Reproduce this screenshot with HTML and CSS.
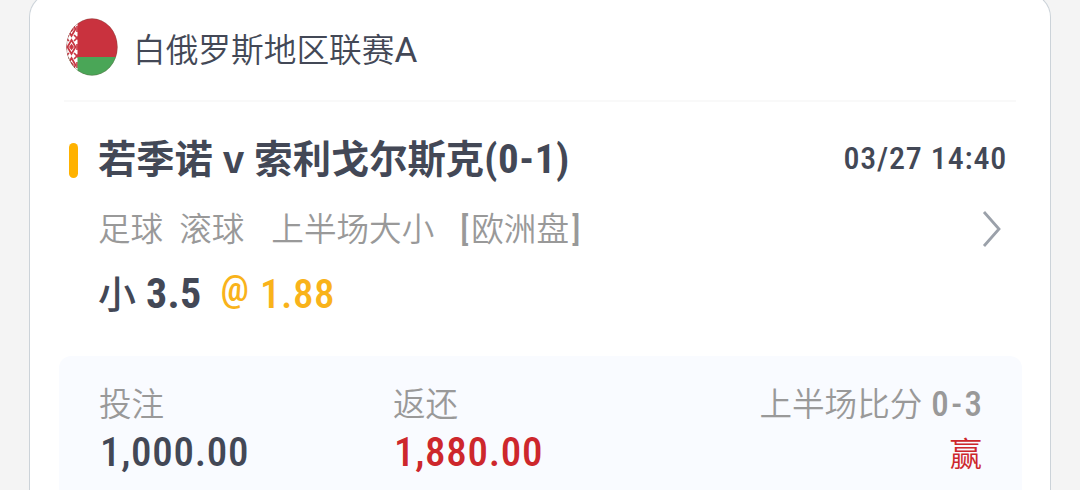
FILE: index.html
```html
<!DOCTYPE html>
<html lang="zh-CN">
<head>
  <meta charset="UTF-8">
  <meta name="viewport" content="width=device-width, initial-scale=1.0">
  <title>注单</title>
  <link rel="stylesheet" href="styles.css">
</head>
<body>
  <div class="card">
    <div class="league">
      <svg class="flag" viewBox="0 0 52 58">
        <defs>
          <clipPath id="round"><ellipse cx="26" cy="29" rx="25.5" ry="28.5"/></clipPath>
          <pattern id="ornament" width="11" height="18" y="20" patternUnits="userSpaceOnUse">
            <rect width="11" height="18" fill="#fff"/>
            <path d="M5.500 2L9.500 9L5.500 16L1.500 9Z" fill="none" stroke="#c93643" stroke-width="1.800"/>
            <path d="M5.500 7L7 9L5.500 11L4 9ZM0 0L3 3M11 0L8 3M0 18L3 15M11 18L8 15M0 6V12M11 6V12" fill="#c93643" stroke="#c93643" stroke-width="1.600"/>
          </pattern>
        </defs>
        <g clip-path="url(#round)">
          <rect width="52" height="39" fill="#c9323e"/>
          <rect y="39" width="52" height="19" fill="#4aa657"/>
          <rect width="11.500" height="58" fill="url(#ornament)"/>
        </g>
        <ellipse cx="26" cy="29" rx="25.300" ry="28.300" fill="none" stroke="#65513f" stroke-opacity=".3"/>
      </svg>
      <span class="leagueName">白俄罗斯地区联赛<span class="latin">A</span></span>
    </div>

    <div class="match">
      <div class="row title">
        <i class="mark"></i>
        <h1>若季诺 <span class="vs">v</span> 索利戈尔斯克<span class="num">(0-1)</span></h1>
        <span class="time num">03/27 14:40</span>
      </div>
      <div class="row market">
        <span class="sport">足球</span>
        <span class="live">滚球</span>
        <span class="play">上半场大小</span>
        <span class="plate"><span class="num">[</span>欧洲盘<span class="num">]</span></span>
        <svg class="arrow" viewBox="0 0 20 38"><path d="M2 2L17 19L2 36" fill="none" stroke="#9ba1aa" stroke-width="2.800"/></svg>
      </div>
      <div class="row pick">
        <b class="side">小</b><b class="num line">3.5</b>
        <span class="num at">@</span><span class="num odds">1.88</span>
      </div>
    </div>

    <div class="result">
      <div class="col stake">
        <label>投注</label>
        <span class="num money">1,000.00</span>
      </div>
      <div class="col">
        <label>返还</label>
        <span class="num money red">1,880.00</span>
      </div>
      <div class="col score">
        <label>上半场比分<span class="num">0-3</span></label>
        <span class="win red">赢</span>
      </div>
    </div>
  </div>
</body>
</html>
```

FILE: styles.css
```css
* { box-sizing: border-box; }
body { margin: 0; height: 490px; overflow: hidden; background: #f4f4f4; color: #434856; font-family: "Noto Sans CJK SC", sans-serif; }
.card { width: 1022px; height: 497px; margin: -7px 0 0 29px; padding: 6px 28px 0 29px; background: #fff; border: 1px solid #ccd3d9; border-bottom: 0; border-radius: 24px 24px 0 0; }
.num, .latin { font-family: Roboto, "Noto Sans CJK SC", sans-serif; font-stretch: 87%; }

.league { display: flex; align-items: center; height: 102px; margin: 0 6px 0 5px; padding: 0 0 6px 2px; border-bottom: 2px solid #f9f9f9; }
.flag { width: 52px; height: 58px; margin-right: 15px; }
.leagueName { padding-top: 4px; font-size: 32.7px; font-weight: 350; line-height: 48px; }
.latin { font-size: 35px; font-stretch: 95%; font-weight: 400; }

.match { height: 254px; padding: 28px 15px 0 10px; }
.row { display: flex; align-items: center; white-space: nowrap; }
.title { height: 56px; }
.mark { width: 9px; height: 35px; margin-right: 20px; margin-top: 4px; border-radius: 5px; background: #ffb200; }
h1 { margin: 0; font-size: 38.3px; line-height: 56px; font-weight: 700; }
.vs { margin: 0 1px; }
h1 .num { font-size: 41px; letter-spacing: .6px; }
.time { margin-left: auto; font-size: 32px; font-weight: 500; letter-spacing: .8px; }
.market { height: 80px; padding-left: 29px; font-size: 32.6px; font-weight: 350; color: #999; }
.live { margin-left: 16px; }
.play { margin-left: 27px; }
.plate { margin-left: 26px; }
.plate .num { font-weight: 500; letter-spacing: 2.6px; }
.plate .num:last-child { letter-spacing: 0; margin-left: 3px; }
.arrow { width: 20px; height: 38px; margin: 6px 5px 0 auto; }
.pick { height: 56px; font-size: 38px; padding-left: 29px; align-items: baseline; margin-top: -2px; }
.side { font-weight: 500; }
.line { margin-left: 10px; font-size: 42px; letter-spacing: .3px; }
.at { padding-bottom: 8px; margin: 0 0 0 19px; font-size: 37px; font-weight: 500; color: #f9b31a; align-self: center; }
.odds { margin-left: 11px; font-size: 41px; font-weight: 500; letter-spacing: .5px; color: #f9b31a; }

.result { display: flex; height: 134px; padding: 22px 40px 0 40px; background: #f9fbff; border-radius: 12px 12px 0 0; }
.col { display: flex; flex-direction: column; white-space: nowrap; }
.stake { width: 294px; }
label { font-size: 32.6px; line-height: 48px; font-weight: 350; color: #999; }
.money { padding-left: 1px; font-size: 41px; line-height: 52px; font-weight: 500; letter-spacing: .7px; }
.score { margin-left: auto; align-items: flex-end; }
.score .num { margin-left: 9px; font-size: 35px; font-weight: 500; letter-spacing: 2.4px; margin-right: -2.4px; }
.win { font-size: 32.6px; line-height: 45px; font-weight: 350; }
.red { color: #cd272c; }
```
